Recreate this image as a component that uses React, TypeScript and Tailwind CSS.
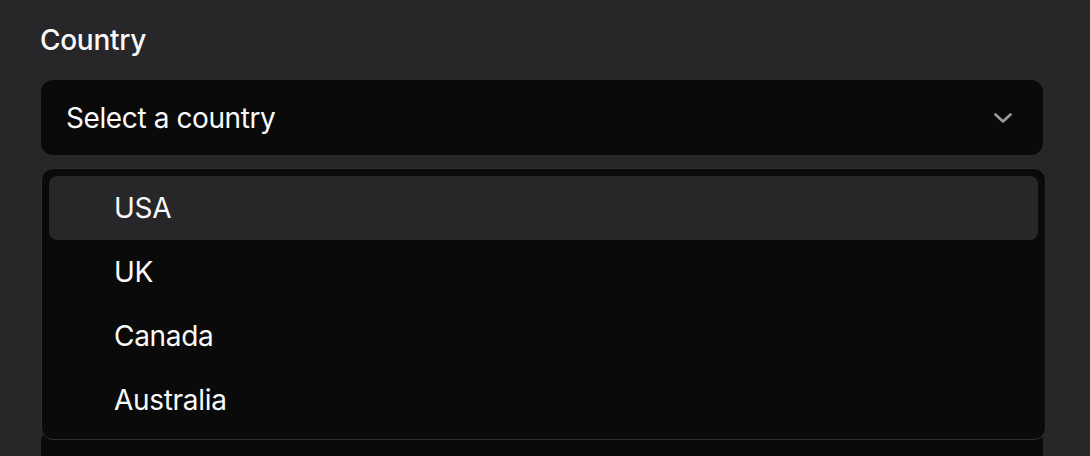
import React from "react";

export default function App() {
  const items = ["USA", "UK", "Canada", "Australia"];
  return (
    <div
      className="h-[456px] w-[1090px] overflow-hidden bg-[#27272a] text-[#fafafa]"
      style={{ fontFamily: "Inter, 'Noto Sans', sans-serif" }}
    >
      <div className="pl-[40px] pt-[20px]">
        <div className="h-[40px] text-[28px] leading-[40px] font-medium tracking-[-0.3px]">Country</div>
        <div className="relative mt-[20px]">
          <div className="ml-[1px] flex h-[75px] w-[1002px] items-center justify-between rounded-[12px] bg-[#0a0a0a] pl-[25px] pr-[31px]">
            <span className="text-[28px] leading-[40px] tracking-[-0.4px]">Select a country</span>
            <svg width="18" height="10" viewBox="0 0 18 10" fill="none">
              <path
                d="M1.5 1.5 L9 8.5 L16.5 1.5"
                stroke="#9a9a9c"
                strokeWidth="2.6"
                strokeLinecap="round"
                strokeLinejoin="round"
              />
            </svg>
          </div>
          <div className="ml-[1px] mt-[275px] h-[80px] w-[1002px] rounded-[12px] bg-[#0a0a0a]" />
          <div className="absolute left-[1px] top-[88px] w-[1005px] rounded-[12px] border border-[#2f2f33] bg-[#0a0a0a] p-[7px]">
            {items.map((it, i) => (
              <div
                key={it}
                className={`flex h-[64px] items-center rounded-[8px] pl-[65px] text-[28px] leading-[40px] tracking-[-0.3px] ${
                  i === 0 ? "bg-[#27272a]" : ""
                }`}
              >
                {it}
              </div>
            ))}
          </div>
        </div>
      </div>
    </div>
  );
}
